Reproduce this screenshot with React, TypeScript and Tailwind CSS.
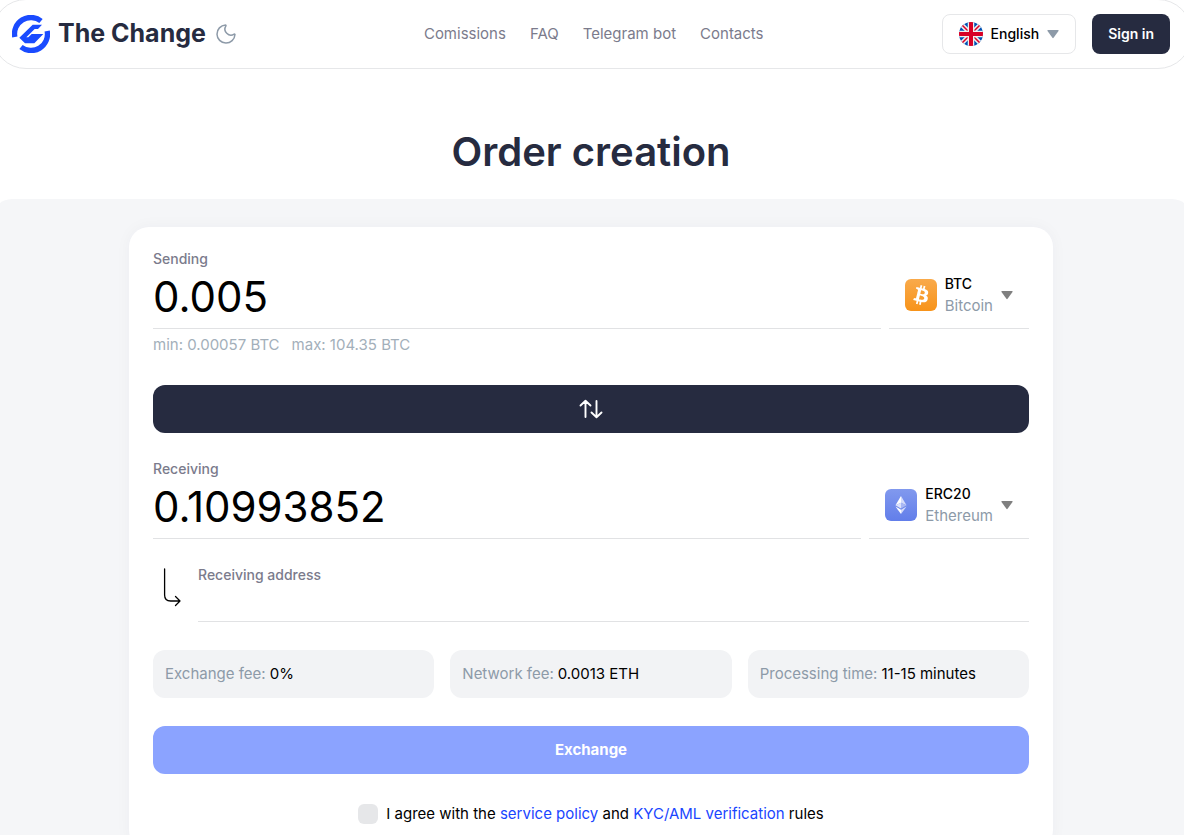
import { useState, type FormEvent, type ReactNode } from "react";
import { Moon } from "lucide-react";

type Currency = {
  code: string;
  name: string;
  icon: ReactNode;
};

const Logo = () => (
  <svg viewBox="0 0 114 114" className="size-[38px]" fill="none" aria-hidden="true">
    <path d="M8.500 66 A49 49 0 0 1 87 18" stroke="#1a4bff" strokeWidth="16" />
    <path d="M105.500 48 A49 49 0 0 1 27 96" stroke="#1a4bff" strokeWidth="16" />
    <path
      d="M22 68 L62 29 H90 L78 42 H68 L43 67 H49 L59 57 H94 L67 85 H39 Z"
      fill="#1a4bff"
    />
  </svg>
);

const FlagIcon = () => (
  <svg viewBox="0 0 24 24" className="size-6" aria-hidden="true">
    <clipPath id="flag-clip">
      <circle cx="12" cy="12" r="12" />
    </clipPath>
    <g clipPath="url(#flag-clip)">
      <path d="M0 0H24V24H0Z" fill="#0052b4" />
      <path d="M0 0L24 24M24 0L0 24" stroke="#f0f0f0" strokeWidth="4.500" />
      <path d="M0 0L24 24M24 0L0 24" stroke="#d80027" strokeWidth="1.500" />
      <path d="M12 0V24M0 12H24" stroke="#f0f0f0" strokeWidth="6.500" />
      <path d="M12 0V24M0 12H24" stroke="#d80027" strokeWidth="4" />
    </g>
  </svg>
);

const Caret = ({ className }: { className: string }) => (
  <svg viewBox="0 0 12 10" className={className} fill="currentColor" aria-hidden="true">
    <path d="M1 1H11Q12 1 11.500 2L6.600 8.800Q6 9.600 5.400 8.800L.5 2Q0 1 1 1Z" />
  </svg>
);

const BitcoinIcon = () => (
  <svg viewBox="0 0 32 32" className="size-8" aria-hidden="true">
    <linearGradient id="btc" x1="0" y1="0" x2="0" y2="1">
      <stop stopColor="#f9aa4b" />
      <stop offset="1" stopColor="#f7931a" />
    </linearGradient>
    <rect width="32" height="32" rx="6" fill="url(#btc)" />
    <path
      fill="#fff"
      d="M23.189 14.020c.314-2.096-1.283-3.223-3.465-3.975l.708-2.840-1.728-.43-.690 2.765c-.454-.114-.920-.220-1.385-.326l.695-2.783L15.596 6l-.708 2.839c-.376-.086-.746-.170-1.104-.260l.002-.009-2.384-.595-.460 1.846s1.283.294 1.256.312c.7.175.826.638.805 1.006l-.806 3.235c.048.012.110.030.180.057l-.183-.045-1.130 4.532c-.086.212-.303.531-.793.410.018.025-1.256-.313-1.256-.313l-.858 1.978 2.250.561c.418.105.828.215 1.231.318l-.715 2.872 1.727.430.708-2.840c.472.127.930.245 1.378.357l-.706 2.828 1.728.430.715-2.866c2.948.558 5.164.333 6.097-2.333.752-2.146-.037-3.385-1.588-4.192 1.130-.260 1.980-1.003 2.207-2.538zm-3.950 5.538c-.533 2.147-4.148.986-5.320.695l.950-3.805c1.172.293 4.929.872 4.370 3.110zm.535-5.569c-.487 1.953-3.495.960-4.470.717l.860-3.450c.975.243 4.118.696 3.610 2.733z"
    />
  </svg>
);

const EthereumIcon = () => (
  <svg viewBox="0 0 32 32" className="size-8" aria-hidden="true">
    <linearGradient id="eth" x1="0" y1="0" x2="0" y2="1">
      <stop stopColor="#8199ee" />
      <stop offset="1" stopColor="#627eea" />
    </linearGradient>
    <rect width="32" height="32" rx="6" fill="url(#eth)" />
    <path d="M16 7L10.500 16.300L16 13.800Z" fill="#fff" />
    <path d="M16 7L21.500 16.300L16 13.800Z" fill="#d5dcfa" />
    <path d="M10.500 16.300L16 19.500V13.800Z" fill="#dce2fb" />
    <path d="M21.500 16.300L16 19.500V13.800Z" fill="#a9b8f4" />
    <path d="M10.500 17.600L16 25V20.800Z" fill="#fff" />
    <path d="M21.500 17.600L16 25V20.800Z" fill="#d5dcfa" />
  </svg>
);

const currencies: Currency[] = [
  { code: "BTC", name: "Bitcoin", icon: <BitcoinIcon /> },
  { code: "ERC20", name: "Ethereum", icon: <EthereumIcon /> },
];

const navLinks = ["Comissions", "FAQ", "Telegram bot", "Contacts"];

const fees = [
  { label: "Exchange fee:", value: "0%" },
  { label: "Network fee:", value: "0.0013 ETH" },
  { label: "Processing time:", value: "11-15 minutes" },
];

type AmountFieldProps = {
  id: string;
  label: string;
  value: string;
  currency: number;
  onValueChange: (value: string) => void;
  onCurrencyChange: (index: number) => void;
};

const AmountField = ({ id, label, value, currency, onValueChange, onCurrencyChange }: AmountFieldProps) => {
  const selected = currencies[currency];

  return (
    <div className="flex gap-2">
      <div className="flex min-w-0 flex-1 flex-col border-b border-[#e1e2e4]">
        <label htmlFor={id} className="text-sm leading-4 font-medium text-[#7b7b8c]">
          {label}
        </label>
        <input
          id={id}
          inputMode="decimal"
          value={value}
          onChange={(event) => onValueChange(event.target.value)}
          className="h-[61px] w-full pb-0.5 text-[42px] text-black outline-none"
        />
      </div>
      <div className="relative flex items-center gap-2 border-b border-[#e1e2e4] px-4 pt-2.5">
        {selected.icon}
        <div aria-hidden="true">
          <div className="text-sm leading-[22px] font-medium text-black">{selected.code}</div>
          <div className="text-[15px] leading-[22px] text-[#8d9aa8]">{selected.name}</div>
        </div>
        <Caret className="h-[10px] w-3 text-[#808080]" />
        <select
          aria-label={`${label} currency`}
          value={currency}
          onChange={(event) => onCurrencyChange(Number(event.target.value))}
          className="absolute inset-0 w-full cursor-pointer opacity-0"
        >
          {currencies.map((item, index) => (
            <option key={item.code} value={index}>
              {item.name}
            </option>
          ))}
        </select>
      </div>
    </div>
  );
};

const Header = () => (
  <header className="-mx-2 -mt-px flex h-[70px] items-center justify-between rounded-[34px] border border-[#e6e7e9] bg-white pr-[21px] pl-[19px]">
    <div className="flex items-center">
      <a href="#" className="flex items-center gap-2 text-[25px] font-bold text-[#262b40]">
        <Logo />
        The Change
      </a>
      <button type="button" aria-label="Toggle dark theme" className="px-2 text-[#8d9aa8]">
        <Moon className="size-6" strokeWidth={1.5} />
      </button>
    </div>
    <nav className="flex gap-6 text-[15px] leading-6 text-[#7b7b8c]">
      {navLinks.map((link) => (
        <a key={link} href="#">
          {link}
        </a>
      ))}
    </nav>
    <div className="flex items-center gap-4">
      <div className="relative flex h-10 items-center gap-2 rounded-lg border border-[#e6e7e9] px-4">
        <FlagIcon />
        <span aria-hidden="true" className="text-sm font-medium text-black">
          English
        </span>
        <Caret className="h-[10px] w-3 text-[#8d9aa8]" />
        <select aria-label="Language" className="absolute inset-0 w-full cursor-pointer opacity-0">
          <option>English</option>
        </select>
      </div>
      <button type="button" className="h-10 rounded-lg bg-[#262b40] px-4 text-sm font-semibold text-white">
        Sign in
      </button>
    </div>
  </header>
);

export default function App() {
  const [sending, setSending] = useState("0.005");
  const [receiving, setReceiving] = useState("0.10993852");
  const [from, setFrom] = useState(0);
  const [to, setTo] = useState(1);
  const [address, setAddress] = useState("");
  const [agreed, setAgreed] = useState(false);

  const handleSwap = () => {
    setSending(receiving);
    setReceiving(sending);
    setFrom(to);
    setTo(from);
  };

  const handleSubmit = (event: FormEvent<HTMLFormElement>) => {
    event.preventDefault();
  };

  return (
    <div className="min-h-screen overflow-hidden bg-white font-['Inter',sans-serif]">
      <Header />
      <main>
        <h1 className="pt-14 pr-0.5 pb-5 text-center text-[40px] leading-[54px] font-semibold text-[#262b40]">
          Order creation
        </h1>
        <section className="-mx-2 rounded-t-[20px] bg-[#f5f6f8] pt-7 pr-[10px] pb-7 pl-2">
          <form
            onSubmit={handleSubmit}
            className="mx-auto flex max-w-[924px] flex-col gap-7 rounded-[20px] bg-white p-6 shadow-[0_0_16px_rgba(38,43,64,0.04)]"
          >
            <div>
              <AmountField
                id="sending"
                label="Sending"
                value={sending}
                currency={from}
                onValueChange={setSending}
                onCurrencyChange={setFrom}
              />
              <p className="mt-1 flex gap-3 text-[15px] leading-6 text-[#a3afba]">
                <span>min: 0.00057 BTC</span>
                <span>max: 104.35 BTC</span>
              </p>
            </div>
            <button
              type="button"
              aria-label="Swap currencies"
              onClick={handleSwap}
              className="flex h-12 items-center justify-center rounded-xl bg-[#262b40] text-white"
            >
              <svg viewBox="0 0 24 24" className="size-6" fill="none" stroke="currentColor" strokeWidth="1.900" strokeLinecap="round" strokeLinejoin="round" aria-hidden="true">
                <path d="M6.500 20V4M1.500 8.500L6.500 3.800L11.500 8.500M17.500 4V20M12.500 15.500L17.500 20.200L22.500 15.500" />
              </svg>
            </button>
            <AmountField
              id="receiving"
              label="Receiving"
              value={receiving}
              currency={to}
              onValueChange={setReceiving}
              onCurrencyChange={setTo}
            />
            <div className="flex">
              <svg viewBox="0 0 45 40" className="h-10 w-[45px] shrink-0" fill="none" stroke="#000" strokeWidth="1.300" strokeLinecap="round" strokeLinejoin="round" aria-hidden="true">
                <path d="M11.600 2V28Q11.600 34 17.600 34H27M22.500 29.500L27 34L22.500 38.500" />
              </svg>
              <div className="flex flex-1 flex-col border-b border-[#e1e2e4]">
                <label htmlFor="address" className="text-sm leading-4 font-medium text-[#7b7b8c]">
                  Receiving address
                </label>
                <input
                  id="address"
                  value={address}
                  onChange={(event) => setAddress(event.target.value)}
                  className="h-[38px] w-full text-[15px] text-black outline-none"
                />
              </div>
            </div>
            <div className="grid grid-cols-3 gap-4">
              {fees.map((fee) => (
                <div key={fee.label} className="flex h-12 items-center gap-1 rounded-xl bg-[#f2f3f5] px-3 text-[15px] leading-6">
                  <span className="text-[#8d9aa8]">{fee.label}</span>
                  <span className="text-black">{fee.value}</span>
                </div>
              ))}
            </div>
            <button type="submit" className="h-12 rounded-xl bg-[#8ba3ff] text-[15px] font-bold text-white">
              Exchange
            </button>
            <div className="flex items-center justify-center gap-2 text-[15px] leading-6 text-black">
              <input
                id="agree"
                type="checkbox"
                checked={agreed}
                onChange={(event) => setAgreed(event.target.checked)}
                className="size-5 appearance-none rounded-md bg-[#e6e7e9] checked:bg-[#1a4bff]"
              />
              <label htmlFor="agree">
                I agree with the{" "}
                <a href="#" className="text-[#1a46ff]">
                  service policy
                </a>{" "}
                and{" "}
                <a href="#" className="text-[#1a46ff]">
                  KYC/AML verification
                </a>{" "}
                rules
              </label>
            </div>
          </form>
        </section>
      </main>
    </div>
  );
}
